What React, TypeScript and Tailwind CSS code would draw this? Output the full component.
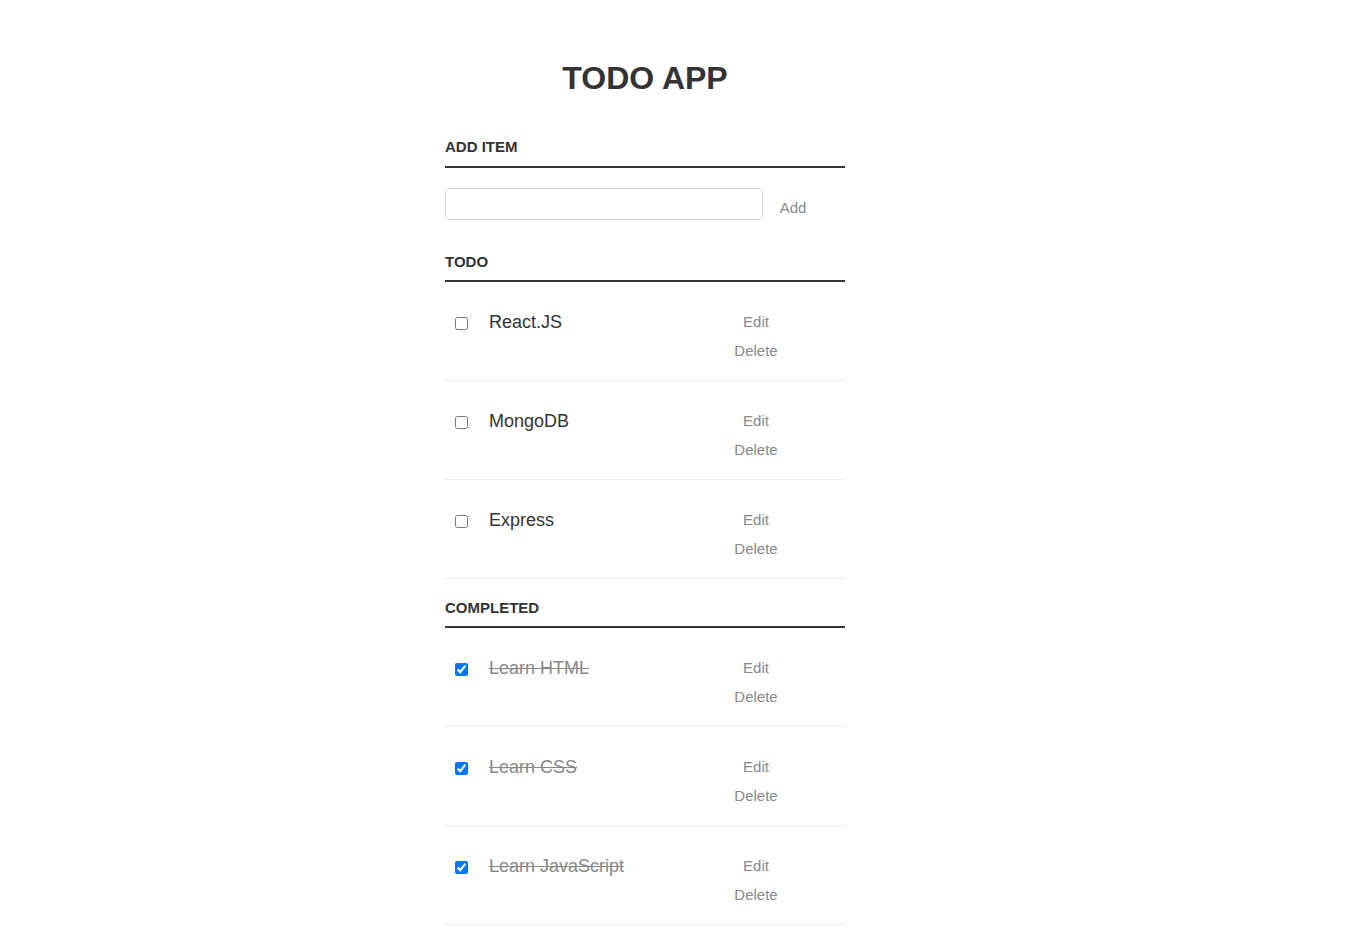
import { useState } from "react";

type Task = {
  id: number;
  text: string;
  done: boolean;
};

const initialTasks: Task[] = [
  { id: 1, text: "React.JS", done: false },
  { id: 2, text: "MongoDB", done: false },
  { id: 3, text: "Express", done: false },
  { id: 4, text: "Learn HTML", done: true },
  { id: 5, text: "Learn CSS", done: true },
  { id: 6, text: "Learn JavaScript", done: true },
];

function SectionTitle({ children, className }: { children: string; className: string }) {
  return (
    <h3 className={`border-b-2 border-[#333] text-[15px] font-bold leading-[20px] text-[#333] uppercase ${className}`}>
      {children}
    </h3>
  );
}

function TaskRow({ task, onToggle, onDelete }: { task: Task; onToggle: () => void; onDelete: () => void }) {
  return (
    <li className="flex h-[99px] border-b border-[#eee]">
      <div className="w-[44px] pt-[35px] pl-[10px]">
        <input type="checkbox" checked={task.done} onChange={onToggle} className="m-0 block h-[13px] w-[13px]" />
      </div>
      <label
        className={`w-[237px] pt-[28px] text-[18px] leading-[24px] ${task.done ? "text-[#888] line-through" : "text-[#333]"}`}
      >
        {task.text}
      </label>
      <div className="flex w-[60px] flex-col items-center gap-[9px] pt-[30px] text-[15px] leading-[20px] text-[#888]">
        <button type="button" className="cursor-pointer">Edit</button>
        <button type="button" className="cursor-pointer" onClick={onDelete}>Delete</button>
      </div>
    </li>
  );
}

export default function App() {
  const [tasks, setTasks] = useState<Task[]>(initialTasks);
  const [draft, setDraft] = useState("");

  const toggle = (id: number) => setTasks((prev) => prev.map((t) => (t.id === id ? { ...t, done: !t.done } : t)));
  const remove = (id: number) => setTasks((prev) => prev.filter((t) => t.id !== id));
  const add = () => {
    if (!draft.trim()) return;
    setTasks((prev) => [...prev, { id: Date.now(), text: draft.trim(), done: false }]);
    setDraft("");
  };

  const todo = tasks.filter((t) => !t.done);
  const completed = tasks.filter((t) => t.done);

  return (
    <div className="min-h-screen bg-white font-['Liberation_Sans',Arial,sans-serif] text-[#333]">
      <div className="ml-[445px] w-[400px] pb-10">
        <h1 className="pt-[59px] text-center text-[32px] font-bold leading-[38px] text-[#333]">TODO APP</h1>

        <SectionTitle className="mt-[40px] pb-[9px]">Add item</SectionTitle>
        <div className="mt-[20px] flex items-start">
          <input
            type="text"
            value={draft}
            onChange={(e) => setDraft(e.target.value)}
            className="h-[32px] w-[318px] rounded-[4px] border border-[#ddd] px-[10px] text-[18px] outline-none"
          />
          <button type="button" onClick={add} className="mt-[10px] w-[60px] cursor-pointer text-[15px] leading-[20px] text-[#888]">
            Add
          </button>
        </div>

        <SectionTitle className="mt-[32px] pb-[8px]">Todo</SectionTitle>
        <ul>
          {todo.map((t) => (
            <TaskRow key={t.id} task={t} onToggle={() => toggle(t.id)} onDelete={() => remove(t.id)} />
          ))}
        </ul>

        <SectionTitle className="mt-[19px] pb-[8px]">Completed</SectionTitle>
        <ul>
          {completed.map((t) => (
            <TaskRow key={t.id} task={t} onToggle={() => toggle(t.id)} onDelete={() => remove(t.id)} />
          ))}
        </ul>
      </div>
    </div>
  );
}
